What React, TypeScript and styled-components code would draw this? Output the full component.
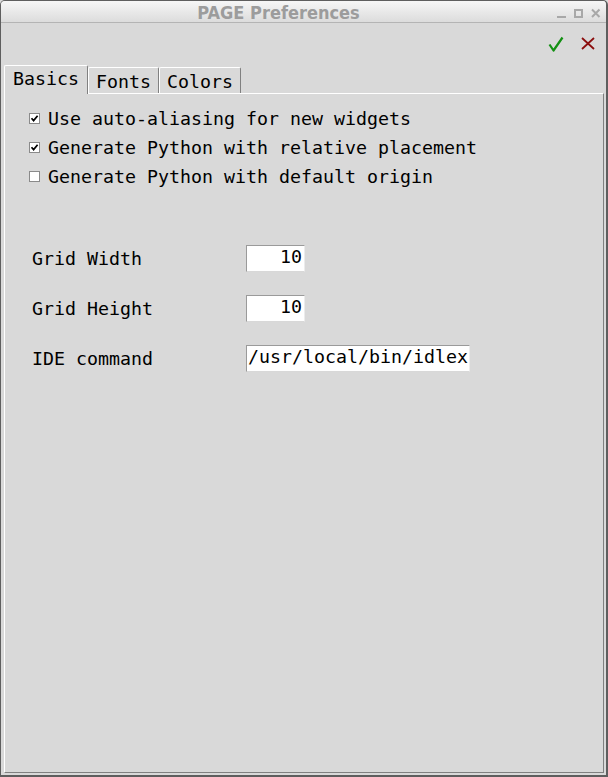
import React from "react";
import styled, { createGlobalStyle } from "styled-components";

const GlobalStyle = createGlobalStyle`
  html, body { margin: 0; padding: 0; background: #d9d9d9; }
  * { box-sizing: border-box; }
`;

const Window = styled.div`
  width: 608px;
  height: 777px;
  display: flex;
  flex-direction: column;
  background: #d9d9d9;
  border: 1px solid #5e5e5e;
  border-right-width: 2px;
  border-bottom-width: 2px;
  border-radius: 5px 5px 0 0;
  overflow: hidden;
  font-family: "DejaVu Sans Mono", monospace;
  font-size: 18.27px;
  color: #000;
`;

const TitleBar = styled.div`
  height: 22px;
  flex: none;
  display: flex;
  align-items: center;
  background: linear-gradient(#f6f6f6, #dcdcdc);
  border-bottom: 1px solid #b4b4b4;
`;

const Title = styled.div`
  flex: 1;
  text-align: center;
  font-family: "DejaVu Sans Condensed", "DejaVu Sans", sans-serif;
  font-stretch: condensed;
  font-weight: bold;
  font-size: 18px;
  line-height: 21px;
  padding-top: 2px;
  color: #9c9c9c;
`;

const Controls = styled.svg`
  flex: none;
  width: 50px;
  height: 21px;
`;

const Body = styled.div`
  flex: 1;
  display: flex;
  flex-direction: column;
  padding: 0 2px 2px 3px;
  min-height: 0;
`;

const Toolbar = styled.div`
  height: 42px;
  flex: none;
  display: flex;
  justify-content: flex-end;
  align-items: center;
  gap: 16px;
  padding-right: 8px;
`;

const IconButton = styled.svg`
  width: 16px;
  height: 16px;
  display: block;
`;

const Notebook = styled.div`
  flex: 1;
  display: flex;
  flex-direction: column;
  min-height: 0;
`;

const TabBar = styled.div`
  display: flex;
  align-items: flex-end;
  height: 28px;
  flex: none;
`;

const Tab = styled.div<{ $active?: boolean }>`
  position: relative;
  z-index: ${(p) => (p.$active ? 1 : 0)};
  background: #d9d9d9;
  border-top: 1px solid #ffffff;
  border-left: 1px solid #ffffff;
  border-right: 1px solid #808080;
  border-radius: 2px 2px 0 0;
  white-space: nowrap;
  height: ${(p) => (p.$active ? "29px" : "26px")};
  margin-bottom: ${(p) => (p.$active ? "-1px" : "0")};
  padding: ${(p) => (p.$active ? "0 8px" : "0 7px")};
  line-height: ${(p) => (p.$active ? "26px" : "28px")};
`;

const Pane = styled.div`
  flex: 1;
  border-top: 1px solid #ffffff;
  border-left: 1px solid #ffffff;
  border-right: 1px solid #808080;
  border-bottom: 1px solid #808080;
  padding-top: 10px;
  display: flex;
  flex-direction: column;
`;

const CheckList = styled.div`
  display: flex;
  flex-direction: column;
  padding-left: 24px;
`;

const CheckRow = styled.label`
  display: flex;
  align-items: center;
  gap: 8px;
  height: 29px;
  line-height: 34px;
  white-space: nowrap;
`;

const Box = styled.svg`
  width: 11px;
  height: 11px;
  flex: none;
  display: block;
`;

const Form = styled.div`
  margin-top: 54px;
  display: grid;
  grid-template-columns: 214px auto;
  grid-auto-rows: 27px;
  row-gap: 23px;
  padding-left: 27px;
  align-items: center;
`;

const Label = styled.div`
  line-height: 22px;
  white-space: nowrap;
`;

const Entry = styled.div<{ $width: number; $align: "left" | "right" }>`
  width: ${(p) => p.$width}px;
  height: 27px;
  background: #ffffff;
  border-top: 1px solid #9a9a9a;
  border-left: 1px solid #9a9a9a;
  border-right: 1px solid #ececec;
  border-bottom: 1px solid #d8d8d8;
  line-height: 22px;
  text-align: ${(p) => p.$align};
  padding: ${(p) => (p.$align === "right" ? "0 2px 0 0" : "0 0 0 1px")};
  white-space: nowrap;
  overflow: hidden;
`;

const CheckBox = ({ checked }: { checked: boolean }) => (
  <Box viewBox="0 0 11 11">
    <rect x="0.5" y="0.5" width="10" height="10" fill="#fff" stroke="#8a8a8a" />
    {checked && (
      <path d="M2.5 5.2 L4.6 7.6 L8.6 2.8" fill="none" stroke="#000" strokeWidth="1.7" />
    )}
  </Box>
);

const checks = [
  { label: "Use auto-aliasing for new widgets", checked: true },
  { label: "Generate Python with relative placement", checked: true },
  { label: "Generate Python with default origin", checked: false },
];

const fields: { label: string; value: string; width: number; align: "left" | "right" }[] = [
  { label: "Grid Width", value: "10", width: 59, align: "right" },
  { label: "Grid Height", value: "10", width: 59, align: "right" },
  { label: "IDE command", value: "/usr/local/bin/idlex", width: 224, align: "left" },
];

export default function App() {
  return (
    <>
      <GlobalStyle />
      <Window>
        <TitleBar>
          <Title>PAGE Preferences</Title>
          <Controls viewBox="0 0 50 21">
            <rect x="1" y="15" width="9" height="2" fill="#a8a8a8" />
            <rect x="19" y="9" width="7" height="7" fill="none" stroke="#a8a8a8" strokeWidth="2" />
            <path d="M36 8.5 L43.5 16 M43.5 8.5 L36 16" stroke="#a8a8a8" strokeWidth="2" />
          </Controls>
        </TitleBar>
        <Body>
          <Toolbar>
            <IconButton viewBox="0 0 16 16">
              <path d="M1.5 8.5 L5.5 14.5 L14.5 1.5" fill="none" stroke="#139013" strokeWidth="2.2" strokeLinejoin="round" />
            </IconButton>
            <IconButton viewBox="0 0 16 16">
              <path d="M2 2 L14 13 M14 2 L2 13" fill="none" stroke="#8b0e0e" strokeWidth="1.8" />
            </IconButton>
          </Toolbar>
          <Notebook>
            <TabBar>
              <Tab $active>Basics</Tab>
              <Tab>Fonts</Tab>
              <Tab>Colors</Tab>
            </TabBar>
            <Pane>
              <CheckList>
                {checks.map((c) => (
                  <CheckRow key={c.label}>
                    <CheckBox checked={c.checked} />
                    <span>{c.label}</span>
                  </CheckRow>
                ))}
              </CheckList>
              <Form>
                {fields.map((f) => (
                  <React.Fragment key={f.label}>
                    <Label>{f.label}</Label>
                    <Entry $width={f.width} $align={f.align}>
                      {f.value}
                    </Entry>
                  </React.Fragment>
                ))}
              </Form>
            </Pane>
          </Notebook>
        </Body>
      </Window>
    </>
  );
}
